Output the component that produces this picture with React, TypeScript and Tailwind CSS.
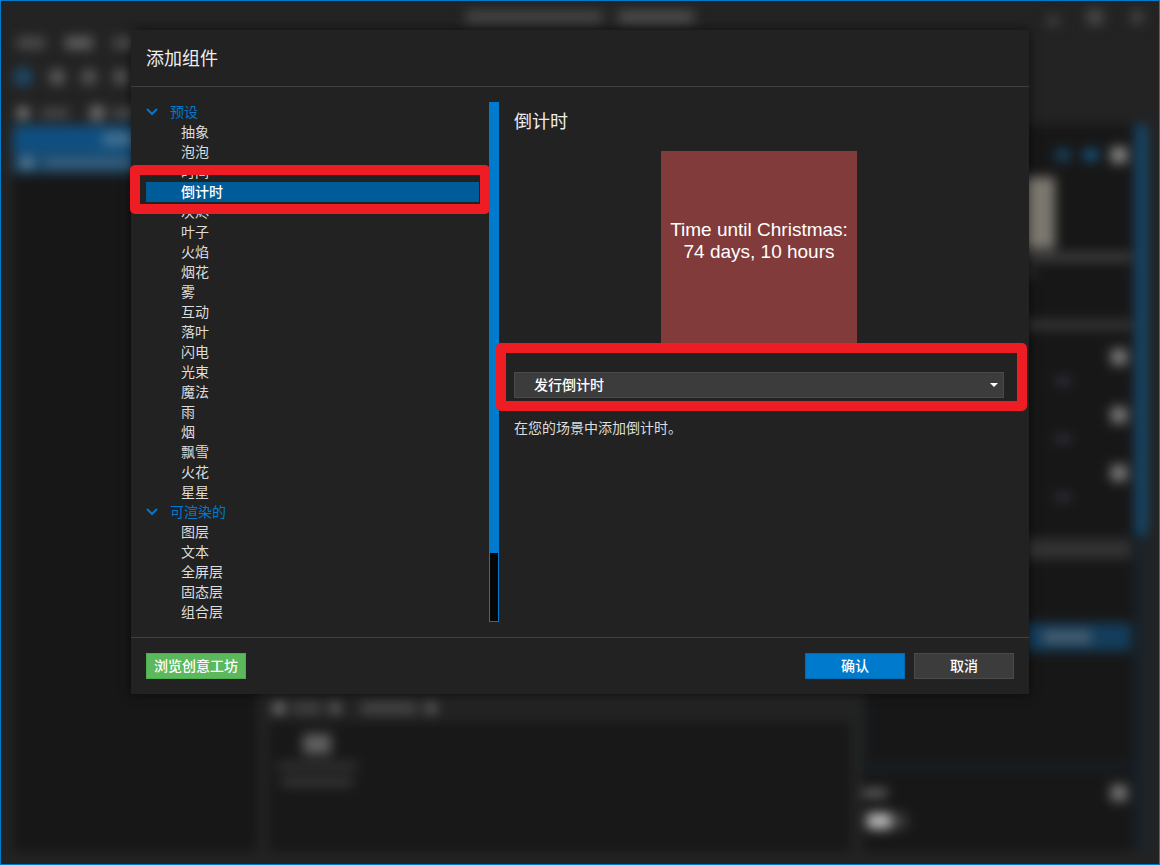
const groups = [
  {
    title: "预设",
    items: [
      "抽象",
      "泡泡",
      "时间",
      "倒计时",
      "灰烬",
      "叶子",
      "火焰",
      "烟花",
      "雾",
      "互动",
      "落叶",
      "闪电",
      "光束",
      "魔法",
      "雨",
      "烟",
      "飘雪",
      "火花",
      "星星",
    ],
  },
  {
    title: "可渲染的",
    items: ["图层", "文本", "全屏层", "固态层", "组合层"],
  },
];

const selected = "倒计时";

// Red marker frame: square inside, slightly rounded outside
function Marker({ className }: { className: string }) {
  return (
    <div
      className={`pointer-events-none absolute z-10 rounded-[5px] border-10 border-[#ee1c23] ${className}`}
    ></div>
  );
}

// Dimmed and blurred editor window behind the dialog
function EditorBackdrop() {
  return (
    <div
      aria-hidden="true"
      className="absolute inset-0 flex flex-col overflow-hidden bg-[#232323]"
    >
      <div className="flex flex-1 flex-col blur-[6px]">
        {/* Title bar */}
        <div className="flex h-8 items-center">
          <div className="w-28"></div>
          <div className="flex flex-1 items-center justify-center gap-4">
            <div className="h-3 w-[136px] bg-[#484848]"></div>
            <div className="h-3 w-[76px] bg-[#505050]"></div>
          </div>
          <div className="flex w-28 items-center justify-end gap-7 pr-4">
            <div className="mt-2 h-2 w-3 bg-[#484848]"></div>
            <div className="size-4 bg-[#484848]"></div>
            <div className="size-3 bg-[#484848]"></div>
          </div>
        </div>

        {/* Menu */}
        <div className="flex h-5 items-center gap-5 pl-4">
          <div className="h-3 w-7 bg-[#4c4c4c]"></div>
          <div className="h-3 w-7 bg-[#626262]"></div>
          <div className="h-3 w-7 bg-[#4c4c4c]"></div>
        </div>

        {/* Toolbar */}
        <div className="flex h-12 items-center gap-4 pl-3">
          <div className="size-5 rounded-full bg-[#1d4867]"></div>
          <div className="size-4 rounded-full bg-[#606060]"></div>
          <div className="size-4 rounded-full bg-[#585858]"></div>
          <div className="size-4 rounded-full bg-[#585858]"></div>
        </div>

        <div className="flex flex-1">
          {/* Layer list */}
          <div className="flex w-64 flex-col pb-3 pl-3">
            <div className="flex h-6 items-center gap-3 pl-1">
              <div className="size-3 rounded-full bg-[#909090]"></div>
              <div className="h-2 w-7 bg-[#505050]"></div>
              <div className="ml-2 size-4 rounded-full bg-[#707070]"></div>
              <div className="-ml-1 h-2 w-9 bg-[#585858]"></div>
            </div>
            <div className="flex-1 bg-[#171717]">
              <div className="flex h-7 items-center justify-center bg-[#0f4f80]">
                <div className="h-3 w-16 bg-[#4a7391]"></div>
              </div>
              <div className="flex h-5 items-center gap-3 bg-[#1d4a6b] pl-2">
                <div className="size-3 rounded-full bg-[#68889f]"></div>
                <div className="h-2 w-24 bg-[#3d6380]"></div>
              </div>
            </div>
          </div>

          {/* Viewport and asset browser */}
          <div className="flex flex-1 flex-col pb-3">
            <div className="flex-1"></div>
            <div className="flex h-7 items-center gap-2 pl-4">
              <div className="size-3 rounded-full bg-[#848484]"></div>
              <div className="h-3 w-7 bg-[#424242]"></div>
              <div className="size-3 rounded-full bg-[#666666]"></div>
              <div className="ml-3 h-3 w-14 bg-[#464646]"></div>
              <div className="size-3 rounded-full bg-[#666666]"></div>
            </div>
            <div className="mx-3 flex h-[130px] flex-col bg-[#181818] pt-3 pl-2">
              <div className="flex w-20 flex-col items-center gap-2">
                <div className="h-5 w-7 bg-[#606060]"></div>
                <div className="h-2 w-20 bg-[#343434]"></div>
                <div className="h-2 w-18 bg-[#3a3a3a]"></div>
              </div>
            </div>
          </div>

          {/* Properties */}
          <div className="mt-6 mr-3 mb-3 flex w-[284px]">
            <div className="flex flex-1 flex-col bg-[#171717] pr-1">
              <div className="flex h-[52px] items-center justify-end gap-3 pt-2 pr-1">
                <div className="h-3 w-4 rounded-full bg-[#184768]"></div>
                <div className="h-3 w-4 rounded-full bg-[#185888]"></div>
                <div className="size-4 bg-[#888888]"></div>
              </div>
              <div className="mr-[76px] h-18 bg-[#7c7870]"></div>
              <div className="mt-1 h-2 bg-[#444444]"></div>
              <div className="mt-2 mr-24 h-2 bg-[#343434]"></div>
              <div className="mt-11 h-2 bg-[#3c3c3c]"></div>
              {[0, 1, 2].map((row) => (
                <div key={row} className="flex h-[58px] flex-col pt-5 pr-1">
                  <div className="size-4 self-end bg-[#7c7c7c]"></div>
                  <div className="mt-3 mr-14 h-2 w-4 self-end bg-[#303040]"></div>
                </div>
              ))}
              <div className="mt-9 h-5 bg-[#323232]"></div>
              <div className="mt-16 flex h-7 items-center justify-end bg-[#143d5c] pr-10">
                <div className="h-3 w-12 bg-[#4a6070]"></div>
              </div>
              <div className="h-[118px] border-b-4 border-l-2 border-[#182530]"></div>
              <div className="mt-4 flex items-center justify-between pr-1">
                <div className="h-2 w-6 bg-[#686868]"></div>
                <div className="size-4 bg-[#787878]"></div>
              </div>
              <div className="mt-3 flex items-center pl-1">
                <div className="h-4 w-6 bg-[#b8b8b8]"></div>
                <div className="h-4 w-4 bg-[#3c3c3c]"></div>
              </div>
            </div>
            <div className="w-3 bg-[#19242c]">
              <div className="h-[410px] bg-[#154a70]"></div>
            </div>
          </div>
        </div>
      </div>
    </div>
  );
}

function ComponentTree() {
  return (
    <div className="relative flex w-[353px] shrink-0">
      <div className="flex-1 pr-[10px]">
        {groups.map((group) => (
          <div key={group.title}>
            <button className="flex h-5 w-full items-center gap-3 pb-0.5 text-left leading-4 text-[#007acc]">
              <svg
                viewBox="0 0 12 8"
                className="mt-px h-2 w-3 fill-none stroke-current stroke-2"
              >
                <path d="M1 1l5 5 5-5" />
              </svg>
              {group.title}
            </button>
            <ul>
              {group.items.map((item) => (
                <li key={item} className="relative">
                  <button
                    className={`block h-5 w-full pb-0.5 pl-[35px] text-left leading-4 ${
                      item === selected
                        ? "bg-[#005c99] font-medium text-white"
                        : "text-[#dddddd]"
                    }`}
                  >
                    {item}
                  </button>
                  {item === selected && (
                    <Marker className="-top-[17px] -right-[11px] -bottom-3 -left-4" />
                  )}
                </li>
              ))}
            </ul>
          </div>
        ))}
      </div>
      {/* Scrollbar */}
      <div className="w-[10px] border border-[#007acc] bg-[#050606]">
        <div className="h-[450px] bg-[#007acc]"></div>
      </div>
    </div>
  );
}

function ComponentDetails() {
  return (
    <div className="min-w-0 flex-1 pr-[10px]">
      <h2 className="pt-1 text-lg leading-7 text-[#eeeeee]">倒计时</h2>
      <div className="mx-auto mt-[17px] size-[196px] bg-[#823b3b] pt-[68px] text-center font-['Liberation_Sans',sans-serif] text-[19px] leading-[22px] whitespace-nowrap text-white">
        Time until Christmas:
        <br />
        74 days, 10 hours
      </div>
      <div className="relative mt-[25px]">
        <select
          aria-label="倒计时"
          className="block h-[26px] w-full appearance-none border border-[#4a4a4a] bg-[#3c3c3c] pb-0.5 pl-[19px] leading-5 font-medium text-white"
        >
          <option>发行倒计时</option>
        </select>
        <svg
          viewBox="0 0 8 4"
          className="pointer-events-none absolute top-[11px] right-[6px] h-1 w-2 fill-white"
        >
          <path d="M0 0h8L4 4z" />
        </svg>
        <Marker className="-top-[29px] -right-[23px] -bottom-[13px] -left-[18px]" />
      </div>
      <p className="mt-[19px] text-[#dddddd]">在您的场景中添加倒计时。</p>
    </div>
  );
}

export default function App() {
  return (
    <div className="relative min-h-screen border border-[#007acc] bg-[#232323] font-['Noto_Sans_CJK_SC',sans-serif] text-sm leading-5">
      <EditorBackdrop />
      <div
        role="dialog"
        aria-labelledby="dialog-title"
        className="relative mx-auto mt-[29px] max-w-[898px] bg-[#222222] shadow-[0_0_10px_rgba(0,0,0,0.6)]"
      >
        <div className="border-b border-[#404040] px-[15px] pb-0.5">
          <h1
            id="dialog-title"
            className="text-lg leading-[54px] text-[#eeeeee]"
          >
            添加组件
          </h1>
        </div>
        <div className="flex gap-[15px] p-[15px]">
          <ComponentTree />
          <ComponentDetails />
        </div>
        <div className="flex gap-[9px] border-t border-[#404040] p-[15px] font-medium text-white">
          <button className="mr-auto h-[26px] w-[100px] border border-[#4cae4c] bg-[#5cb85c] pb-0.5">
            浏览创意工坊
          </button>
          <button className="h-[26px] w-[100px] border border-[#006bb3] bg-[#007acc] pb-0.5">
            确认
          </button>
          <button className="h-[26px] w-[100px] border border-[#4a4a4a] bg-[#3c3c3c] pb-0.5">
            取消
          </button>
        </div>
      </div>
    </div>
  );
}
